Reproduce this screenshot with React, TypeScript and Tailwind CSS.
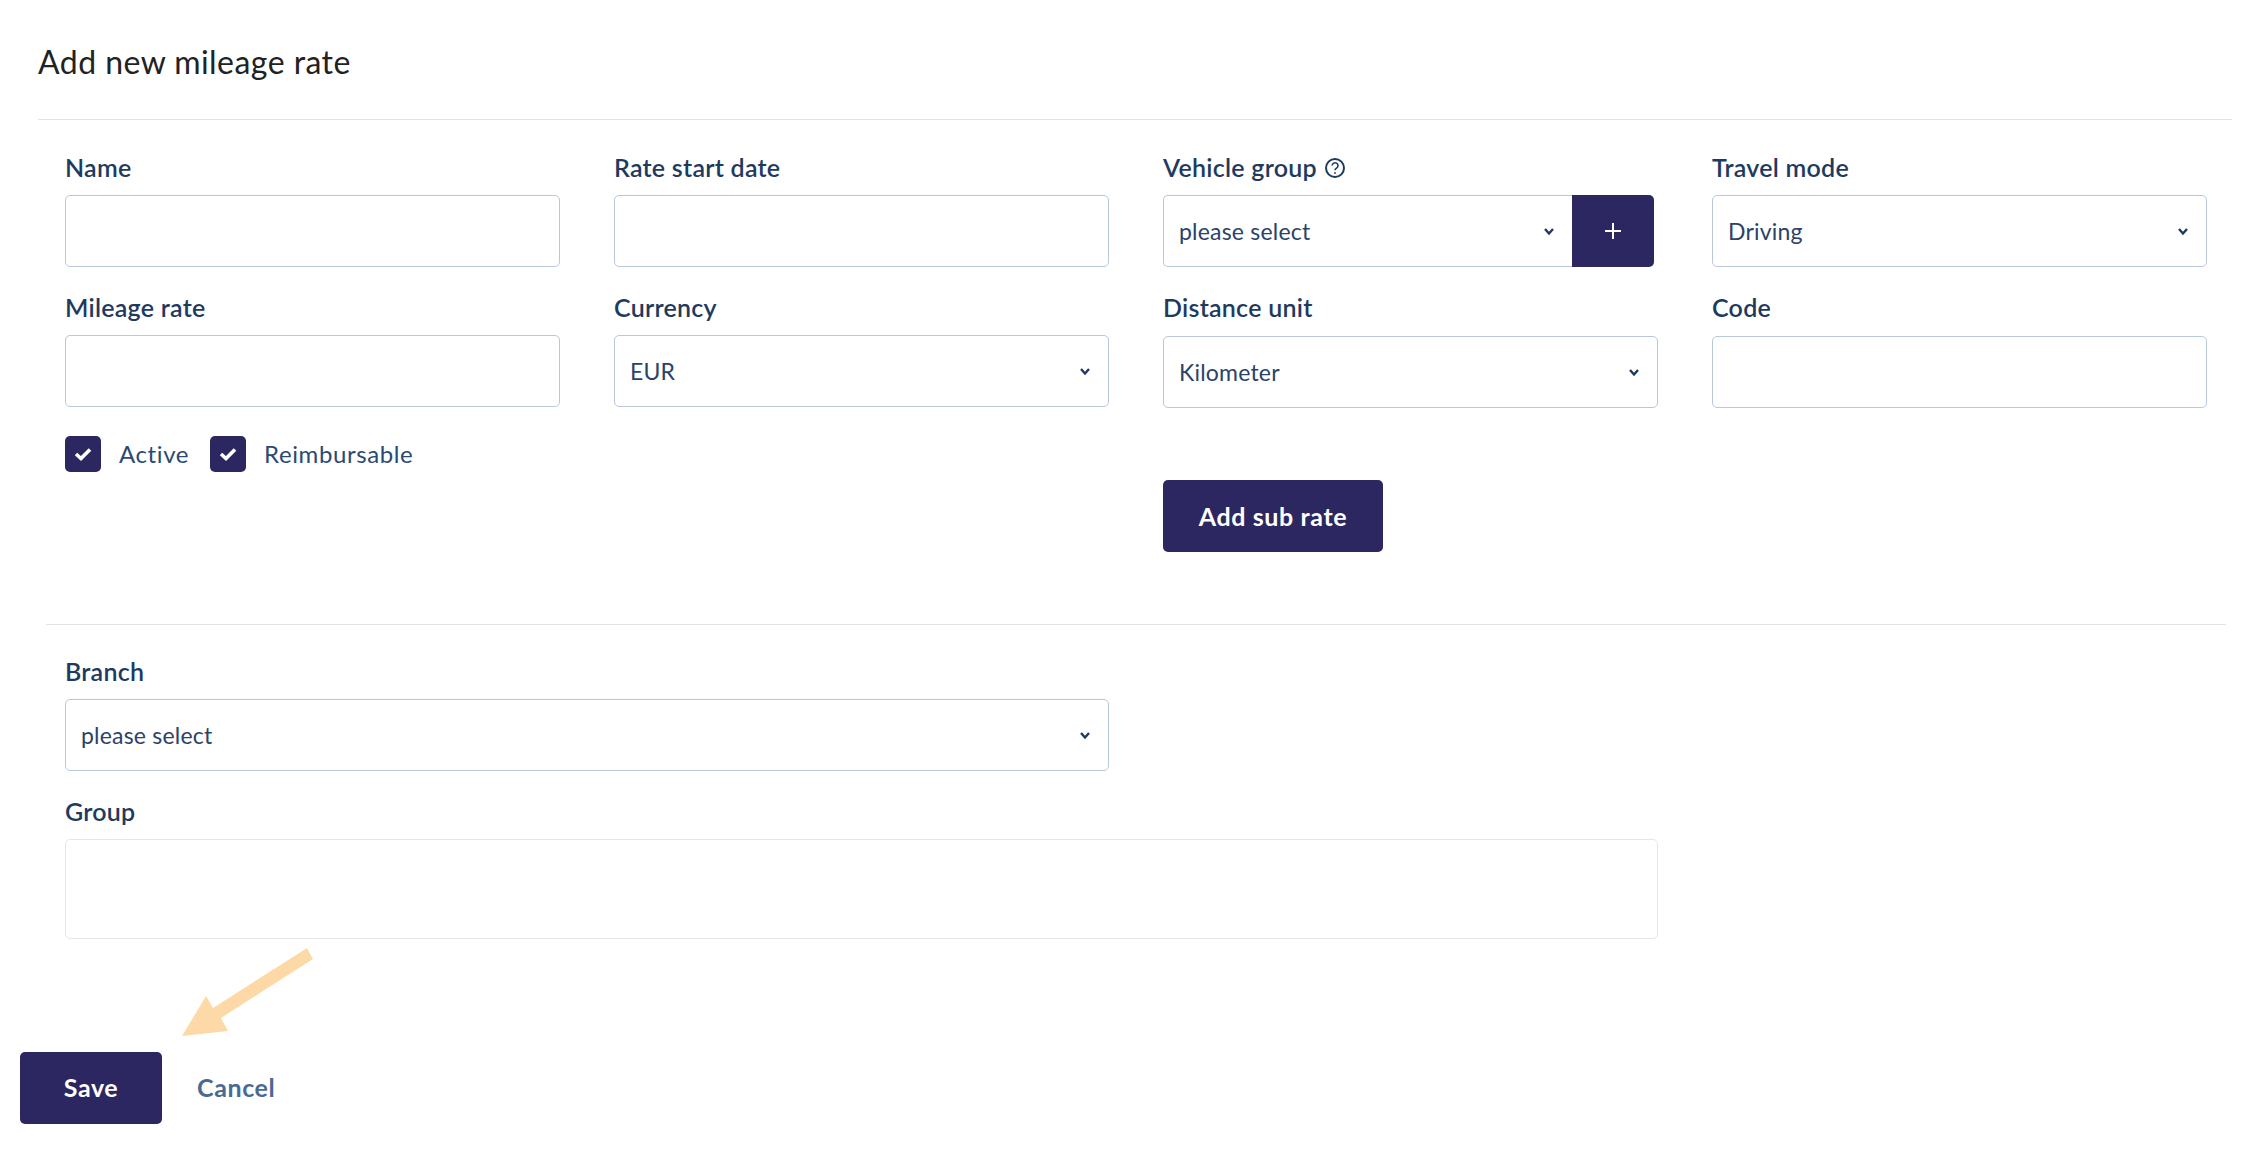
import React, { ReactNode } from 'react';

const labelClass = 'block h-[28px] text-[25px] leading-[26px] font-semibold text-[#1e3a5f] tracking-[0.25px]';
const boxClass = 'h-[72px] w-full rounded-[5px] border border-[#b9c7dc] bg-white';
const solidText = 'text-[25px] font-bold tracking-[0.6px]';

function Chevron() {
  return (
    <svg width="12" height="9" viewBox="0 0 12 9" fill="none" stroke="#1e3a5f" strokeWidth="2.4" className="shrink-0">
      <path d="M2 2 L6 6.5 L10 2" />
    </svg>
  );
}

function Field({ label, extra, children }: { label: string; extra?: ReactNode; children: ReactNode }) {
  return (
    <div className="flex flex-col gap-[13px]">
      <div className="flex items-center gap-[7px]">
        <span className={labelClass}>{label}</span>
        {extra}
      </div>
      {children}
    </div>
  );
}

function Select({ value, className = '' }: { value: string; className?: string }) {
  return (
    <div className={`${boxClass} flex items-center justify-between pl-[15px] pr-[17px] ${className}`}>
      <span className="text-[23px] tracking-[0.2px] text-[#2b4269]">{value}</span>
      <Chevron />
    </div>
  );
}

function Checkbox({ label }: { label: string }) {
  return (
    <div className="flex items-center gap-[18px]">
      <div className="flex h-[36px] w-[36px] items-center justify-center rounded-[5px] bg-[#2c2760]">
        <svg width="18" height="14" viewBox="0 0 18 14" fill="none" stroke="#fff" strokeWidth="3.6">
          <path d="M2 7 L7 11.5 L16 2.5" />
        </svg>
      </div>
      <span className="text-[24px] leading-[34px] tracking-[0.6px] text-[#2b4a73]">{label}</span>
    </div>
  );
}

export default function App() {
  return (
    <div className="relative h-[1158px] w-full overflow-hidden bg-white font-['Lato','Liberation_Sans',sans-serif]">
      <h1 className="pl-[38px] pt-[44px] text-[32px] leading-[36px] font-normal tracking-[0.45px] text-[#222]">Add new mileage rate</h1>
      <div className="ml-[38px] mr-[24px] mt-[39px] h-px bg-[#dfe3e8]" />

      <div className="pl-[65px] pt-[34px]">
        <div className="grid grid-cols-[repeat(4,495px)] gap-x-[54px] gap-y-[27px]">
          <Field label="Name">
            <input className={boxClass} />
          </Field>
          <Field label="Rate start date">
            <input className={boxClass} />
          </Field>
          <Field
            label="Vehicle group"
            extra={
              <svg width="22" height="22" viewBox="0 0 22 22" fill="none" stroke="#1e3a5f" strokeWidth="2">
                <circle cx="11" cy="11" r="9" />
                <path d="M8.2 8.6a2.9 2.9 0 1 1 4.4 2.5c-1 .6-1.6 1.1-1.6 2.2" strokeWidth="1.6" />
                <circle cx="11" cy="16" r="0.6" strokeWidth="1" />
              </svg>
            }
          >
            <div className="flex w-[491px]">
              <Select value="please select" className="rounded-r-none border-r-0" />
              <div className="flex h-[72px] w-[82px] shrink-0 items-center justify-center rounded-r-[5px] bg-[#2c2760]">
                <svg width="16" height="16" viewBox="0 0 16 16" stroke="#fff" strokeWidth="2">
                  <path d="M8 0 V16 M0 8 H16" />
                </svg>
              </div>
            </div>
          </Field>
          <Field label="Travel mode">
            <Select value="Driving" />
          </Field>

          <Field label="Mileage rate">
            <input className={boxClass} />
          </Field>
          <Field label="Currency">
            <Select value="EUR" />
          </Field>
          <Field label="Distance unit">
            <Select value="Kilometer" className="mt-px" />
          </Field>
          <Field label="Code">
            <input className={`${boxClass} mt-px`} />
          </Field>
        </div>

        <div className="grid grid-cols-[repeat(4,495px)] gap-x-[54px]">
          <div className="col-span-2 flex items-start gap-[21px] pt-[28px]">
            <Checkbox label="Active" />
            <Checkbox label="Reimbursable" />
          </div>
          <div className="pt-[72px]">
            <button className={`h-[72px] w-[220px] rounded-[5px] bg-[#2c2760] pt-[2px] text-white ${solidText}`}>Add sub rate</button>
          </div>
        </div>
      </div>

      <div className="ml-[46px] mr-[30px] mt-[72px] h-px bg-[#dfe3e8]" />

      <div className="flex flex-col gap-[27px] pl-[65px] pt-[33px]">
        <Field label="Branch">
          <div className="w-[1044px]">
            <Select value="please select" />
          </div>
        </Field>
        <Field label="Group">
          <div className="h-[100px] w-[1593px] rounded-[5px] border border-[#e4e6e9] bg-white" />
        </Field>
      </div>

      <div className="flex items-center gap-[35px] pl-[20px] pt-[113px]">
        <button className={`h-[72px] w-[142px] rounded-[5px] bg-[#2c2760] text-white ${solidText}`}>Save</button>
        <span className={`text-[#4a6a94] ${solidText}`}>Cancel</span>
      </div>

      <svg className="absolute left-[182px] top-[948px]" width="131" height="88" viewBox="182 948 131 88">
        <polygon points="307,948 313,959 221,1018 228,1031 182,1036 206,996 213,1008" fill="#fed9a8" />
      </svg>
    </div>
  );
}
